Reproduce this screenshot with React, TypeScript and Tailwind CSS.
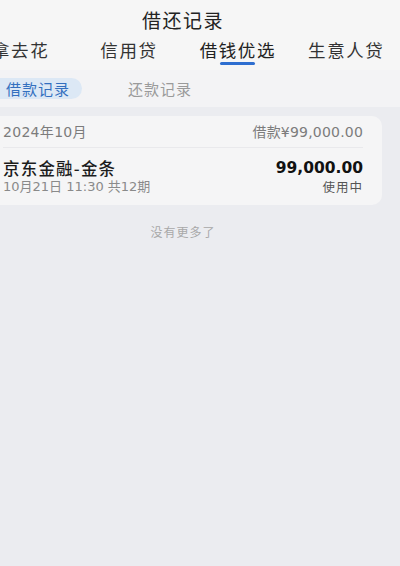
import React from "react";

const font = { fontFamily: '"Noto Sans CJK SC", "Noto Sans", sans-serif' };
const num = { fontFamily: '"DejaVu Sans", "Noto Sans CJK SC", sans-serif' };

export default function App() {
  return (
    <div className="w-[400px] h-[566px] overflow-hidden bg-[#ebecf0] text-[#222]" style={font}>
      <div className="bg-[#f6f6f6] h-[70px] flex flex-col">
        <div className="h-[40px] flex items-center justify-center">
          <span className="ml-[-34px] text-[19px] tracking-[1.5px] text-[#222]">借还记录</span>
        </div>
        <div className="flex h-[30px] items-start text-[17.5px] tracking-[1.6px] text-[#333]">
          <span className="ml-[-8px] leading-[20px]">拿去花</span>
          <span className="ml-[51px] leading-[20px]">信用贷</span>
          <div className="ml-[42px] flex flex-col items-center">
            <span className="leading-[20px] text-[#222]">借钱优选</span>
            <div className="mt-[2px] w-[35px] h-[3px] rounded-full bg-[#2f6fd0]" />
          </div>
          <span className="ml-[32px] leading-[20px]">生意人贷</span>
        </div>
      </div>
      <div className="bg-[#f3f3f5] h-[37px] flex items-center text-[15px] tracking-[1px]">
        <div className="ml-[-14px] h-[21px] pl-[20px] pr-[12px] rounded-full bg-[#dce8f5] text-[#3470bf] flex items-center leading-none">
          借款记录
        </div>
        <span className="ml-[46px] text-[#9a9a9a] leading-none">还款记录</span>
      </div>
      <div className="mt-[9px] ml-[-13px] mr-[18px] rounded-[10px] bg-[#f5f5f6] px-[16px] pr-[19px]">
        <div className="h-[32px] flex items-center justify-between border-b border-[#e9e9ec] text-[14px] text-[#7c7c7c] pt-[1px] leading-[16px]" style={num}>
          <span className="tracking-[0.3px]">2024年10月</span>
          <span className="tracking-[0.2px]">借款¥99,000.00</span>
        </div>
        <div className="h-[57px] flex items-center justify-between pt-[1px]">
          <div className="flex flex-col">
            <span className="text-[16.5px] leading-[19px] font-medium tracking-[1.2px] text-[#1c1c1c]">京东金融-金条</span>
            <span className="text-[13px] leading-[16px] text-[#8a8a8a] mt-[1px]" style={num}>10月21日 11:30 共12期</span>
          </div>
          <div className="flex flex-col items-end">
            <span className="text-[15.5px] leading-[19px] font-bold text-[#111]" style={num}>99,000.00</span>
            <span className="text-[12.5px] leading-[16px] text-[#555] tracking-[1px] mt-[1px]">使用中</span>
          </div>
        </div>
      </div>
      <div className="mt-[18px] flex justify-center">
        <span className="ml-[-34px] text-[12px] tracking-[1px] text-[#a8a8a8]">没有更多了</span>
      </div>
    </div>
  );
}
